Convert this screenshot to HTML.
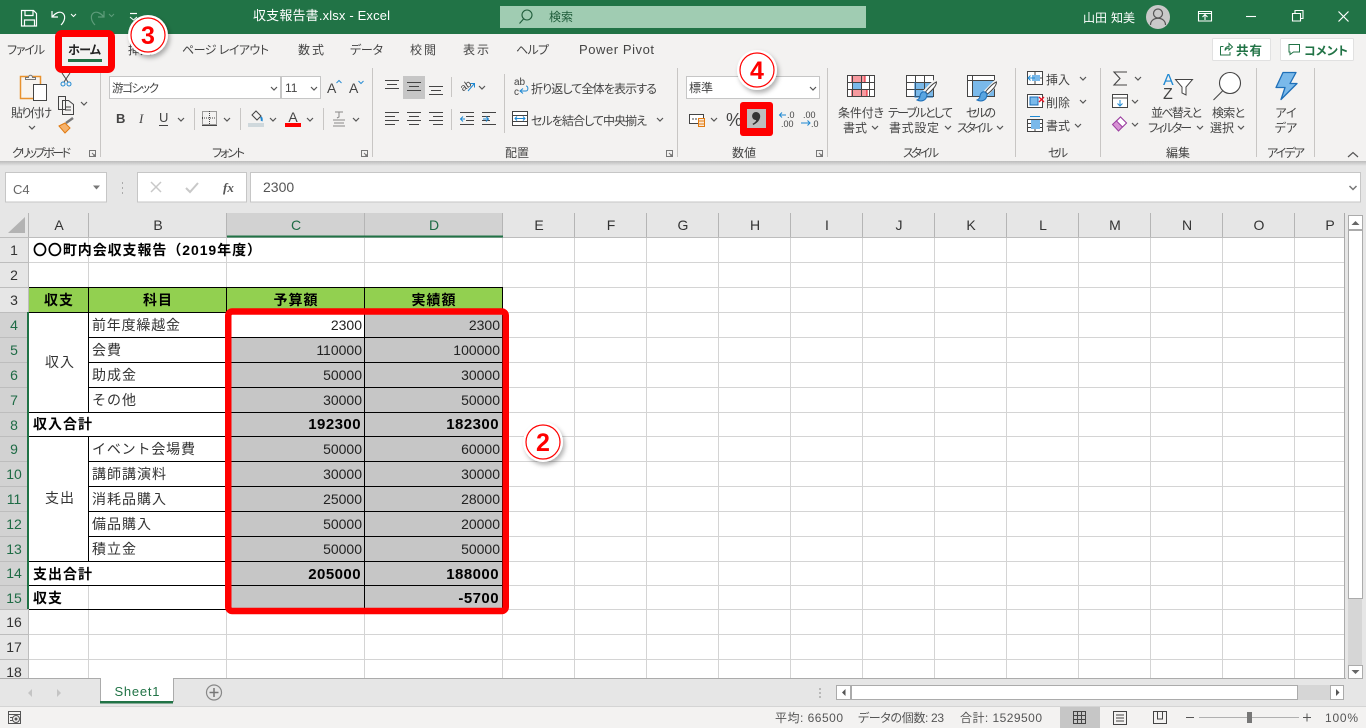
<!DOCTYPE html>
<html lang="ja"><head><meta charset="utf-8"><title>収支報告書.xlsx - Excel</title>
<style>
html,body{margin:0;padding:0;background:#fff;width:1366px;height:728px;overflow:hidden}
svg{display:block}
text{font-family:"Liberation Sans","Noto Sans CJK JP",sans-serif;font-size:12px;fill:#444;font-feature-settings:"palt"}
.w text,text.w{fill:#fff}
.cell text{font-size:14px;fill:#333;letter-spacing:1px;font-feature-settings:normal}
.cell text.b{fill:#000}
.num text{font-size:14px;fill:#222;text-anchor:end}
.bn text{font-size:15px;fill:#000;font-weight:700;text-anchor:end;letter-spacing:.45px}
.hd text{font-size:14px;fill:#333;text-anchor:middle}
.hs text{font-size:14px;fill:#1e6b45;text-anchor:middle}
.m{text-anchor:middle}
.b{font-weight:700}
.badge{text-anchor:middle}
</style></head><body>
<svg width="1366" height="728" viewBox="0 0 1366 728" xmlns="http://www.w3.org/2000/svg">
<defs>
<path id="c" d="M0 0l3 3 3-3" fill="none" stroke="#555" stroke-width="1.2"/>
<filter id="s" x="-30%" y="-30%" width="170%" height="170%"><feDropShadow dx="2" dy="3" stdDeviation="2.5" flood-color="#000" flood-opacity=".3"/></filter>
<linearGradient id="rs" x1="0" y1="0" x2="0" y2="1"><stop offset="0" stop-color="#bbb"/><stop offset="1" stop-color="#e6e6e6"/></linearGradient>
</defs>

<!-- backgrounds -->
<rect width="1366" height="728" fill="#e6e6e6"/>
<rect width="1366" height="34" fill="#217346"/>
<rect y="34" width="1366" height="127" fill="#f3f2f1"/>
<rect y="161" width="1366" height="5" fill="url(#rs)"/>

<!-- title bar -->
<g fill="none" stroke="#fff" stroke-width="1.2">
<path d="M21.5 10.5h12l3 3v12.500h-15z"/><path d="M25 10.500v5h8v-5M24.500 26v-6h10v6"/>
<path d="M52 11v6h6M52.500 16.500c3-3.500 7-5.500 10-3.500 3.500 2.500 2.500 8-1.500 12"/>
<path d="M71 14l2.500 2.500L76 14" stroke-width="1"/>
<g stroke="#5d9c7a"><path d="M104 11v6h-6M103.500 16.500c-3-3.500-7-5.500-10-3.500-3.500 2.500-2.500 8 1.500 12"/><path d="M109 14l2.500 2.500 2.500-2.500" stroke-width="1"/></g>
<path d="M130 13.500h7" /><path d="M130 17l3.500 3 3.500-3" stroke-width="1"/>
</g>
<text x="253" y="20" class="w" textLength="137" style="font-size:13px">収支報告書.xlsx  -  Excel</text>
<rect x="500" y="6" width="366" height="22" fill="#a0ccb2"/>
<circle cx="527" cy="15" r="5" fill="none" stroke="#1f5c3a" stroke-width="1.1"/><path d="M523.500 19l-4 4.500" stroke="#1f5c3a" stroke-width="1.1"/>
<text x="549" y="21" style="fill:#1f5c3a">検索</text>
<text x="1083" y="22" class="w" style="font-size:12px">山田</text><text x="1111" y="22" class="w" style="font-size:12px">知美</text>
<circle cx="1158" cy="17" r="12" fill="#c9c9c9"/>
<circle cx="1158" cy="13.500" r="4.500" fill="none" stroke="#555" stroke-width="1.2"/><path d="M1150.500 25c0-9 15-9 15 0" fill="none" stroke="#555" stroke-width="1.2"/>
<g fill="none" stroke="#fff" stroke-width="1.1">
<path d="M1198.500 11.500h13v9.500h-13zM1198.500 13.500h13M1205 20v-5M1202.500 17l2.500-2.500 2.500 2.500"/>
<path d="M1246 16.500h10"/>
<path d="M1292.500 13.500h8v7.500h-8zM1295 13v-2.500h8v8h-2.500"/>
<path d="M1338.500 11.500l10 10M1348.500 11.500l-10 10" stroke-width="1.2"/>
</g>

<!-- tabs -->
<text x="7" y="54" textLength="38">ファイル</text>
<text x="68" y="54" class="b" textLength="33" style="fill:#222">ホーム</text>
<rect x="68" y="59" width="34" height="3" fill="#217346"/>
<text x="128" y="54">挿入</text>
<text x="182" y="54" textLength="87">ページ レイアウト</text>
<text x="298" y="54" textLength="26">数式</text>
<text x="350" y="54" textLength="33">データ</text>
<text x="410" y="54" textLength="26">校閲</text>
<text x="463" y="54" textLength="26">表示</text>
<text x="516" y="54" textLength="33">ヘルプ</text>
<text x="579" y="54" textLength="75" style="font-size:13px">Power Pivot</text>

<!-- share / comment -->
<rect x="1212.500" y="38.500" width="58" height="22" rx="1" fill="#fff" stroke="#e1e1e1"/>
<path d="M1220.500 46.500v8.500h9.500v-3M1220.500 46.500h3M1225 50.500c0-2.500 1.500-4 4-4v-3l3.500 3.500-3.500 3v-2c-1.500 0-3 .8-4 2.500" fill="none" stroke="#217346" stroke-width="1"/>
<text x="1236" y="55" class="b" textLength="26" style="fill:#217346;font-size:12.500px">共有</text>
<rect x="1280.500" y="38.500" width="73" height="22" rx="1" fill="#fff" stroke="#e1e1e1"/>
<path d="M1289 44.500h10.500v7.500h-6l-3.500 2.500v-2.500h-1z" fill="none" stroke="#217346"/>
<text x="1304" y="55" class="b" textLength="44" style="fill:#217346">コメント</text>

<!-- group separators -->
<g stroke="#c8c6c4"><path d="M100.500 68v89M372.500 68v89M677.500 68v89M827.500 68v89M1015.500 68v89M1100.500 68v89M1256.500 68v89M1314.500 68v89M504.500 74v59M451.500 77v20M451.500 109v21M194.500 108v22M240.500 108v22M323.500 108v22"/></g>

<!-- clipboard -->
<rect x="20.500" y="76.500" width="20" height="22" fill="#f8f4ef" stroke="#e8912d" stroke-width="1.500"/>
<path d="M25.500 79.500v-2h3c0-3 4-3 4 0h3v2z" fill="#f3f2f1" stroke="#777"/>
<rect x="33.500" y="84.500" width="13" height="16" fill="#fff" stroke="#444"/>
<text x="11" y="117" textLength="41">貼り付け</text>
<use href="#c" x="29" y="126"/>
<g fill="none" stroke="#444"><path d="M62 73l6 9M70 73l-6 9"/><circle cx="63" cy="84" r="2" stroke="#1e88d2"/><circle cx="69" cy="84" r="2" stroke="#1e88d2"/></g>
<path d="M58.500 96.500h7v13h-7zM62.500 100.500h6l5 4v10h-11z" fill="#f3f2f1" stroke="#444"/><path d="M65 107h6M65 110h6" stroke="#444"/>
<use href="#c" x="81" y="102"/>
<path d="M59 126l6-3 5 5-5 5z" fill="#f6b26b" stroke="#e07a10"/><path d="M66 123l7-5" stroke="#777" stroke-width="2.500"/>
<text x="12" y="157" textLength="59">クリップボード</text>
<g fill="none" stroke="#777"><path d="M89.500 150.500h6v6h-6zM92 153l3 3M95 154v2h-2"/><path d="M361.500 150.500h6v6h-6zM364 153l3 3M367 154v2h-2"/><path d="M666.500 150.500h6v6h-6zM669 153l3 3M672 154v2h-2"/><path d="M816.500 150.500h6v6h-6zM819 153l3 3M822 154v2h-2"/></g>

<!-- font -->
<rect x="109.500" y="76.500" width="171" height="22" fill="#fff" stroke="#c6c6c6"/>
<rect x="281.500" y="76.500" width="39" height="22" fill="#fff" stroke="#c6c6c6"/>
<text x="112" y="92" textLength="47" style="font-size:11.500px">游ゴシック</text>
<use href="#c" x="271" y="87"/>
<text x="285" y="92" style="font-size:12px">11</text>
<use href="#c" x="311" y="87"/>
<text x="327" y="93" style="font-size:14px">A</text><path d="M336.500 83l2.500-2.500 2.500 2.500" fill="none" stroke="#2a8dd4"/>
<text x="349" y="93" style="font-size:14px">A</text><path d="M358.500 81l2.500 2.500 2.500-2.500" fill="none" stroke="#2a8dd4"/>
<text x="116" y="123" class="b" style="font-size:13px">B</text>
<text x="139" y="123" style="font-size:13px;font-style:italic;font-family:'Liberation Serif',serif">I</text>
<text x="159" y="122" style="font-size:13px">U</text><path d="M159 125.500h9" stroke="#444"/>
<use href="#c" x="178" y="118"/>
<g fill="none" stroke="#444"><path d="M202.500 111.500h14v13h-14z" stroke-dasharray="1 1"/><path d="M209.500 111v14M202 118h15" stroke-dasharray="1 1"/><path d="M202 125.500h15"/></g>
<use href="#c" x="224" y="118"/>
<path d="M252 115l4-4 5 5-4 4z" fill="none" stroke="#444"/><path d="M261 117c1 2 1 3 .5 4" stroke="#1e88d2" stroke-width="2" fill="none"/>
<rect x="248" y="123" width="16" height="4" fill="#cfd8dc"/>
<use href="#c" x="270" y="118"/>
<text x="293" y="122" class="m" style="font-size:14px">A</text><rect x="285" y="123" width="16" height="4" fill="#f00"/>
<use href="#c" x="307" y="118"/>
<g stroke="#888" fill="none"><path d="M335 112h8M339 112v5l-2 1M333 120h12M334 123h10M333 126h12"/></g>
<use href="#c" x="353" y="118"/>
<text x="212" y="157" textLength="33">フォント</text>

<!-- alignment -->
<rect x="403" y="76" width="22" height="23" fill="#c6c6c6"/>
<g stroke="#444" fill="none"><path d="M385 80.500h14M387 84.500h10M385 88.500h14"/><path d="M407 82.500h14M409 86.500h10M407 90.500h14"/><path d="M429 86.500h14M431 90.500h10M429 94.500h14"/>
<path d="M385 112.500h14M385 116.500h10M385 120.500h14M385 124.500h10"/><path d="M407 112.500h14M409 116.500h10M407 120.500h14M409 124.500h10"/><path d="M429 112.500h14M433 116.500h10M429 120.500h14M433 124.500h10"/>
<path d="M460 112.500h14M466 116.500h8M466 120.500h8M460 124.500h14M482 112.500h14M482 116.500h8M482 120.500h8M482 124.500h14"/></g>
<path d="M465 119h-4M463 116.500l-2.500 2.500 2.500 2.500M483 119h5M486 116.500l2.500 2.500-2.500 2.500" fill="none" stroke="#1e88d2"/>
<text x="460" y="90" style="font-size:10px;fill:#444" transform="rotate(-35 464 86)">ab</text><path d="M468 91l6-7M470.500 83.500h4v4" fill="none" stroke="#1e88d2"/>
<use href="#c" x="479" y="86"/>
<text x="514" y="85" style="font-size:10px">ab</text><text x="514" y="95" style="font-size:10px">c</text>
<path d="M520 91h6c2.500 0 2.500-5 0-5M523 88.500l-3 2.500 3 2.500" fill="none" stroke="#1e88d2"/>
<text x="531" y="93" textLength="126">折り返して全体を表示する</text>
<path d="M512.500 111.500h15v14h-15zM512 115.500h16M512 121.500h16" fill="#fff" stroke="#444" stroke-width="1"/>
<path d="M515 118.500h10M517 116.500l-2 2 2 2M523 116.500l2 2-2 2" fill="none" stroke="#1e88d2"/>
<text x="531" y="125" textLength="116">セルを結合して中央揃え</text>
<use href="#c" x="657" y="118"/>
<text x="505" y="157" textLength="24">配置</text>

<!-- number -->
<rect x="686.500" y="76.500" width="133" height="22" fill="#fff" stroke="#c6c6c6"/>
<text x="689" y="92" textLength="24">標準</text>
<use href="#c" x="810" y="87"/>
<path d="M689.500 114.500h14v9h-14z" fill="#fff" stroke="#444"/><path d="M692 119h9" stroke="#444" stroke-dasharray="2 1"/>
<path d="M698.500 118.500h6v8h-6zM698.500 121h6M698.500 124h6" fill="#fbe9d7" stroke="#e07a10"/>
<use href="#c" x="711" y="118"/>
<text x="726" y="126" style="font-size:18px">%</text>
<rect x="740" y="102" width="33" height="34" rx="3" fill="#f00"/>
<rect x="747" y="109" width="19" height="19" fill="#bdbdbd"/>
<path d="M756 112c2.400 0 4.200 1.800 4.200 4.300 0 3.700-3 7-7 8.700l-.7-1.200c2-1 3.400-2.400 3.800-3.700-2.400 0-4.200-1.800-4.200-4 0-2.400 1.800-4.100 3.900-4.100z" fill="#333"/>
<path d="M786 115h-6M782 112.500l-2.500 2.500 2.500 2.500M801 123h9M807.500 120.500l2.500 2.500-2.500 2.500" fill="none" stroke="#1e88d2"/>
<text x="787" y="118" style="font-size:9px">.0</text><text x="781" y="127" style="font-size:9px">.00</text>
<text x="803" y="118" style="font-size:9px">.00</text><text x="811" y="127" style="font-size:9px">.0</text>
<text x="732" y="157" textLength="24">数値</text>

<!-- styles -->
<g>
<rect x="847.500" y="75.500" width="27" height="21" fill="#fff"/>
<rect x="852" y="75.500" width="13" height="7" fill="#f79a9f" stroke="#e81123"/><rect x="852" y="89.500" width="15" height="7" fill="#f79a9f" stroke="#e81123"/><rect x="852" y="82.500" width="9" height="7" fill="#7ab9ea"/>
<path d="M847.500 75.500h27v21h-27zM847 82.500h28M847 89.500h28M852.500 75v22M861.500 75v22M869.500 75v22" fill="none" stroke="#444"/>
</g>
<text x="838" y="117" textLength="46">条件付き</text><text x="843" y="132" textLength="24">書式</text><use href="#c" x="872" y="126"/>
<g>
<rect x="906.500" y="75.500" width="27" height="21" fill="#fff"/>
<rect x="915" y="82" width="18" height="15" fill="#7ab9ea"/>
<path d="M906.500 75.500h27v21h-27zM906 82.500h28M906 89.500h28M915.500 75v22M924.500 75v22" fill="none" stroke="#444"/>
<path d="M933 97h-18v-15" fill="none" stroke="#1e6fb8" stroke-width="1"/>
<path d="M936 82l-11 11" stroke="#f3f2f1" stroke-width="6"/><path d="M936.500 82c-3 1-8 6-11 10l2 2c4-3 9-8 9-12z" fill="#fff" stroke="#444"/><path d="M925 92c-3-1-5 2-5 4 0 2-1 3-3 4 4 2 10 1 10-6z" fill="#5aa5e0" stroke="#1e6fb8"/>
</g>
<text x="888" y="117" textLength="65">テーブルとして</text><text x="889" y="132" textLength="50">書式設定</text><use href="#c" x="945" y="126"/>
<g>
<rect x="967.500" y="75.500" width="27" height="21" fill="#fff"/>
<rect x="972.500" y="80.500" width="22" height="16" fill="#7ab9ea" stroke="#1e6fb8"/>
<path d="M967.500 75.500h27v21h-27zM967 80.500h28M972.500 75v22" fill="none" stroke="#444"/>
<path d="M997 82l-11 11" stroke="#f3f2f1" stroke-width="6"/><path d="M996.500 82c-3 1-8 6-11 10l2 2c4-3 9-8 9-12z" fill="#fff" stroke="#444"/><path d="M985 92c-3-1-5 2-5 4 0 2-1 3-3 4 4 2 10 1 10-6z" fill="#5aa5e0" stroke="#1e6fb8"/>
</g>
<text x="966" y="117" textLength="30">セルの</text><text x="957" y="132" textLength="36">スタイル</text><use href="#c" x="997" y="126"/>
<text x="903" y="157" textLength="36">スタイル</text>

<!-- cells -->
<path d="M1027.500 71.500h15v13h-15zM1027 78h16M1035 71v14" fill="#fff" stroke="#444"/><rect x="1032" y="75" width="8" height="6" fill="#7ab9ea"/><path d="M1035 78h-7M1030.500 75.500l-2.500 2.500 2.500 2.500" fill="none" stroke="#1e88d2"/>
<text x="1046" y="84" textLength="24">挿入</text><use href="#c" x="1080" y="77"/>
<path d="M1027.500 94.500h15v13h-15z" fill="#fff" stroke="#444"/><rect x="1030" y="97" width="8" height="8" fill="#7ab9ea" stroke="#1e6fb8"/><path d="M1039 97l5 5M1044 97l-5 5" stroke="#e81123" stroke-width="1.300"/>
<text x="1046" y="107" textLength="24">削除</text><use href="#c" x="1080" y="100"/>
<path d="M1027.500 119.500h15v12h-15zM1027 123.500h16M1035 119v13M1027 127.500h16" fill="#fff" stroke="#444"/><rect x="1031" y="120" width="9" height="9" fill="#7ab9ea"/><path d="M1030 116.500h10" stroke="#1e88d2"/>
<text x="1046" y="130" textLength="24">書式</text><use href="#c" x="1075" y="124"/>
<text x="1048" y="157" textLength="20">セル</text>

<!-- editing -->
<path d="M1127 72h-13l6 6.500-6 6.500h13" fill="none" stroke="#444" stroke-width="1.100"/><use href="#c" x="1135" y="77"/>
<path d="M1112.500 94.500h15v13h-15zM1112 98h16" fill="#fff" stroke="#444"/><path d="M1120 100v6M1117.500 103.500l2.500 2.500 2.500-2.500" fill="none" stroke="#1e88d2"/><use href="#c" x="1132" y="100"/>
<path d="M1112.500 124.500l8-7.500 6 6-8 8z" fill="#d792d4" stroke="#9b3fa0"/><path d="M1117 120.500l6 6" stroke="#9b3fa0"/><path d="M1120.500 117l6 6-4 4-6-6z" fill="#fff" stroke="#9b3fa0"/><use href="#c" x="1132" y="123"/>
<text x="1163" y="85" style="font-size:16px;fill:#1e88d2">A</text><text x="1163" y="99" style="font-size:16px">Z</text>
<path d="M1175.500 79.500h17l-6.500 7.500v8l-4-2v-6z" fill="#fff" stroke="#444"/>
<text x="1151" y="117" textLength="51">並べ替えと</text><text x="1148" y="132" textLength="44">フィルター</text><use href="#c" x="1197" y="126"/>
<circle cx="1230" cy="83" r="10.500" fill="#fff" stroke="#444" stroke-width="1.100"/><path d="M1222.500 91l-9 9" stroke="#444" stroke-width="1.100"/>
<text x="1212" y="117" textLength="33">検索と</text><text x="1210" y="132" textLength="24">選択</text><use href="#c" x="1238" y="126"/>
<text x="1166" y="157" textLength="24">編集</text>

<!-- ideas -->
<path d="M1283 72.500h13l-6 11h7l-16 16 4-12h-9z" fill="#7ab9ea" stroke="#1e6fb8" stroke-width="1.300" stroke-linejoin="round"/>
<text x="1286" y="117" class="m">アイ</text><text x="1286" y="132" class="m">デア</text>
<text x="1267" y="157" textLength="38">アイデア</text>
<path d="M1348 157l5-4.500 5 4.500" fill="none" stroke="#555" stroke-width="1.200"/>

<!-- formula bar -->
<rect x="5.500" y="172.500" width="101" height="29.500" fill="#fff" stroke="#c6c6c6"/>
<text x="13" y="194" style="font-size:13px;fill:#666">C4</text>
<path d="M93 185.500h7l-3.500 4z" fill="#777"/>
<path d="M122.500 182v2M122.500 187v2M122.500 192v2" stroke="#aaa"/>
<rect x="137.500" y="172.500" width="109" height="29.500" fill="#fff" stroke="#c6c6c6"/>
<rect x="250.500" y="172.500" width="1110" height="29.500" fill="#fff" stroke="#c6c6c6"/>
<path d="M151 182l10 10M161 182l-10 10" stroke="#c8c8c8" stroke-width="1.500"/>
<path d="M186 188l4 4 8-9" fill="none" stroke="#c8c8c8" stroke-width="2"/>
<text x="223" y="192" style="font-size:13px;font-style:italic;font-weight:700;font-family:'Liberation Serif',serif;fill:#555">fx</text>
<text x="263" y="192" style="font-size:14px;fill:#555">2300</text>
<path d="M1349.500 186l3.500 3.500 3.500-3.500" fill="none" stroke="#777" stroke-width="1.500"/>

<!-- sheet -->
<rect x="29" y="238" width="1316" height="440" fill="#fff"/>
<!-- headers -->
<rect x="227" y="213" width="276" height="24" fill="#d2d2d2"/>
<rect x="0" y="312" width="28" height="297" fill="#d2d2d2"/>
<path d="M8 233l17-16v16z" fill="#b3b3b3"/>
<g stroke="#b5b5b5"><path d="M28.500 213v24M88.500 213v24M226.500 213v24M364.500 213v24M502.500 213v24M574.500 213v24M646.500 213v24M718.500 213v24M790.500 213v24M862.500 213v24M934.500 213v24M1006.500 213v24M1078.500 213v24M1150.500 213v24M1222.500 213v24M1294.500 213v24"/><path d="M0 237.500h1345M28.500 238v440M0 262.500h28M0 287.500h28M0 312.500h28M0 337.500h28M0 362.500h28M0 387.500h28M0 412.500h28M0 436.500h28M0 461.500h28M0 486.500h28M0 511.500h28M0 536.500h28M0 561.500h28M0 585.500h28M0 609.500h28M0 634.500h28M0 659.500h28" stroke="#bdbdbd"/></g>
<path d="M227 236.500h276" stroke="#217346" stroke-width="2"/>
<!-- light grid -->
<path d="M88.500 238v50M88.500 609v69M226.500 238v50M226.500 609v69M364.500 238v50M364.500 609v69M502.500 238v440M574.500 238v440M646.500 238v440M718.500 238v440M790.500 238v440M862.500 238v440M934.500 238v440M1006.500 238v440M1078.500 238v440M1150.500 238v440M1222.500 238v440M1294.500 238v440M29 262.500h1316M29 287.500h1316M503 312.500h842M503 337.500h842M503 362.500h842M503 387.500h842M503 412.500h842M503 436.500h842M503 461.500h842M503 486.500h842M503 511.500h842M503 536.500h842M503 561.500h842M503 585.500h842M29 609.500h1316M29 634.500h1316M29 659.500h1316M88.500 586v23" stroke="#d4d4d4" fill="none"/>
<!-- data fills -->
<rect x="29" y="288" width="474" height="24" fill="#92d050"/>
<rect x="227" y="313" width="276" height="296" fill="#c6c6c6"/>
<rect x="227" y="313" width="137" height="24" fill="#fff"/>
<!-- black borders -->
<path d="M29 287.500h474M29 312.500h474M89 337.500h414M89 362.500h414M89 387.500h414M29 412.500h474M29 436.500h474M89 461.500h414M89 486.500h414M89 511.500h414M89 536.500h414M29 561.500h474M29 585.500h474M29 609.500h474M88.500 287v125M88.500 437v124M226.500 287v322M364.500 287v322M502.500 287v322" stroke="#000" fill="none"/>
<path d="M28 312v297" stroke="#217346" stroke-width="2"/>
<path d="M0 678.500h1345M1344.500 213v466" stroke="#ababab"/>

<g class="hd">
<text x="59" y="230">A</text><text x="158" y="230">B</text><text x="539" y="230">E</text><text x="611" y="230">F</text><text x="683" y="230">G</text><text x="755" y="230">H</text><text x="827" y="230">I</text><text x="899" y="230">J</text><text x="971" y="230">K</text><text x="1043" y="230">L</text><text x="1115" y="230">M</text><text x="1187" y="230">N</text><text x="1259" y="230">O</text><text x="1330" y="230">P</text>
<text x="14" y="255">1</text><text x="14" y="280">2</text><text x="14" y="305">3</text>
<text x="14" y="627">16</text><text x="14" y="652">17</text>
</g>
<svg x="0" y="660" width="28" height="18" viewBox="0 660 28 18"><text x="14" y="677" style="font-size:14px;fill:#333;text-anchor:middle">18</text></svg>
<g class="hs">
<text x="296" y="230">C</text><text x="434" y="230">D</text>
<text x="14" y="330">4</text><text x="14" y="355">5</text><text x="14" y="380">6</text><text x="14" y="405">7</text><text x="14" y="430">8</text><text x="14" y="454">9</text><text x="14" y="479">10</text><text x="14" y="504">11</text><text x="14" y="529">12</text><text x="14" y="554">13</text><text x="14" y="578">14</text><text x="14" y="603">15</text>
</g>

<g class="cell">
<text x="33" y="255" class="b" textLength="229">〇〇町内会収支報告（2019年度）</text>
<text x="59" y="305" class="b m">収支</text><text x="158" y="305" class="b m">科目</text><text x="296" y="305" class="b m">予算額</text><text x="434" y="305" class="b m">実績額</text>
<text x="60" y="367" class="m">収入</text><text x="60" y="503" class="m">支出</text>
<text x="92" y="330" textLength="89">前年度繰越金</text><text x="92" y="355">会費</text><text x="92" y="380">助成金</text><text x="92" y="405">その他</text>
<text x="33" y="429" class="b">収入合計</text>
<text x="92" y="454" textLength="104">イベント会場費</text><text x="92" y="479">講師講演料</text><text x="92" y="504">消耗品購入</text><text x="92" y="529">備品購入</text><text x="92" y="554">積立金</text>
<text x="33" y="579" class="b">支出合計</text><text x="33" y="603" class="b">収支</text>
</g>
<g class="num">
<text x="362" y="330">2300</text><text x="500" y="330">2300</text>
<text x="362" y="355">110000</text><text x="500" y="355">100000</text>
<text x="362" y="380">50000</text><text x="500" y="380">30000</text>
<text x="362" y="405">30000</text><text x="500" y="405">50000</text>
<text x="362" y="454">50000</text><text x="500" y="454">60000</text>
<text x="362" y="479">30000</text><text x="500" y="479">30000</text>
<text x="362" y="504">25000</text><text x="500" y="504">28000</text>
<text x="362" y="529">50000</text><text x="500" y="529">20000</text>
<text x="362" y="554">50000</text><text x="500" y="554">50000</text>
</g>
<g class="bn">
<text x="361" y="429">192300</text><text x="499" y="429">182300</text>
<text x="361" y="579">205000</text><text x="499" y="579">188000</text>
<text x="499" y="603">-5700</text>
</g>

<!-- vertical scrollbar -->
<rect x="1345" y="213" width="21" height="466" fill="#e6e6e6"/>
<rect x="1348" y="231" width="14" height="434" fill="#d6d6d6"/>
<rect x="1348.500" y="230.500" width="14" height="368" fill="#fff" stroke="#ababab"/>
<rect x="1348.500" y="215.500" width="14" height="14" fill="#fff" stroke="#ababab"/><path d="M1351.500 225l4-4 4 4z" fill="#666"/>
<rect x="1348.500" y="665.500" width="14" height="13" fill="#fff" stroke="#ababab"/><path d="M1351.500 670l4 4 4-4z" fill="#666"/>

<!-- sheet tabs -->
<rect x="0" y="679" width="1366" height="27" fill="#e6e6e6"/>
<path d="M0 678.500h100M173 678.500h1173" stroke="#ababab"/>
<path d="M0 706.500h1366" stroke="#d4d4d4"/>
<path d="M32 689v8l-4-4zM57 689v8l4-4z" fill="#c4c4c4"/>
<path d="M100.500 679v23M173.500 679v23" stroke="#ababab"/>
<rect x="101" y="678" width="72" height="24" fill="#fff"/>
<rect x="100" y="701" width="73" height="2.500" fill="#217346"/>
<text x="137" y="696" class="m" style="font-size:13px;fill:#217346" textLength="45">Sheet1</text>
<circle cx="214" cy="692.500" r="7.500" fill="none" stroke="#888" stroke-width="1.200"/><path d="M214 688v9M209.500 692.500h9" stroke="#777" stroke-width="1.500"/>
<path d="M820 688v2M820 692v2M820 696v2" stroke="#aaa" stroke-width="1.500"/>
<rect x="836" y="685" width="508" height="15" fill="#d6d6d6"/>
<rect x="836.500" y="685.500" width="14" height="14" fill="#fff" stroke="#ababab"/><path d="M845.500 689v7l-3.500-3.500z" fill="#555"/>
<rect x="851.500" y="685.500" width="446" height="14" fill="#fff" stroke="#ababab"/>
<rect x="1330.500" y="685.500" width="13" height="14" fill="#fff" stroke="#ababab"/><path d="M1336 689v7l3.500-3.500z" fill="#555"/>

<!-- status bar -->
<rect x="0" y="707" width="1366" height="21" fill="#f3f2f1"/>
<g fill="none" stroke="#555"><path d="M8.500 711.500h12v12h-12zM8.500 714.500h12"/><circle cx="16" cy="719" r="3.500" fill="#f3f2f1"/><circle cx="16" cy="719" r="1" fill="#555"/><path d="M10 717.500h3M10 720.500h3"/></g>
<g>
<text x="775" y="722" style="font-size:12px;fill:#555" textLength="68">平均: 66500</text>
<text x="858" y="722" style="font-size:12px;fill:#555" textLength="86">データの個数: 23</text>
<text x="960" y="722" style="font-size:12px;fill:#555" textLength="82">合計: 1529500</text>
</g>
<rect x="1060" y="707" width="40" height="21" fill="#c6c6c6"/>
<path d="M1073.500 711.500h12v12h-12zM1077.500 711v13M1081.500 711v13M1073 715.500h13M1073 719.500h13" fill="none" stroke="#444"/>
<path d="M1113.500 711.500h13v13h-13zM1116 715h8M1116 718h8M1116 721h8" fill="none" stroke="#444"/>
<path d="M1153.500 711.500h13v12h-13zM1157.500 711v8h5v-8" fill="none" stroke="#444"/>
<path d="M1186 717.500h8M1303 717.500h8M1307 713.500v8" stroke="#555"/>
<path d="M1199 717.500h100" stroke="#b0b0b0"/>
<rect x="1247" y="712" width="5" height="11" fill="#777"/>
<text x="1325" y="722" style="font-size:12px;fill:#555" textLength="33">100%</text>

<!-- red annotations -->
<rect x="58.500" y="33.500" width="53" height="36" rx="3.500" fill="none" stroke="#f00" stroke-width="7"/>
<rect x="228.250" y="311.500" width="277.500" height="299.500" rx="4" fill="none" stroke="#f00" stroke-width="6.500"/>

<g>
<circle cx="148" cy="35" r="20" fill="#fff" filter="url(#s)"/><circle cx="148" cy="35" r="17" fill="#fff" stroke="#f00" stroke-width="1.200"/>
<text x="148" y="44" class="badge" style="font-size:25px;font-weight:700;fill:#f00">3</text>
<circle cx="757" cy="70" r="20" fill="#fff" filter="url(#s)"/><circle cx="757" cy="70" r="17" fill="#fff" stroke="#f00" stroke-width="1.200"/>
<text x="757" y="79" class="badge" style="font-size:25px;font-weight:700;fill:#f00">4</text>
<circle cx="543" cy="442" r="20" fill="#fff" filter="url(#s)"/><circle cx="543" cy="442" r="17" fill="#fff" stroke="#f00" stroke-width="1.200"/>
<text x="543" y="451" class="badge" style="font-size:25px;font-weight:700;fill:#f00">2</text>
</g>
</svg>
</body></html>
